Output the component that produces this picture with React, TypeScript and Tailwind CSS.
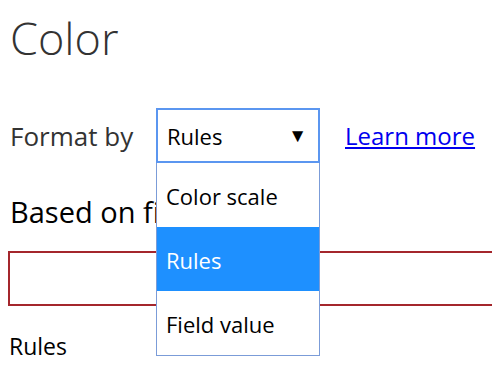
import React from "react";

const OPTIONS = ["Color scale", "Rules", "Field value"];

const App = () => {
  const selected = "Rules";

  return (
    <div className="w-[492px] h-[376px] overflow-hidden bg-white pl-2 font-['Open_Sans',sans-serif]">
      {/* Title */}
      <h1 className="pt-[12px] pl-[2px] text-[45px] leading-[52px] font-light text-[#333]">
        Color
      </h1>

      {/* Format by row */}
      <div className="mt-[44px] flex items-center h-[55px]">
        <span className="w-[148px] pl-[2px] pt-[2px] text-[26px] text-[#333]">Format by</span>
        <div className="relative">
          <div className="w-[164px] h-[55px] flex items-center justify-between pl-[10px] pr-[12px] border border-[#767676] outline-2 outline-[#5b96f0] -outline-offset-2 text-[22px] text-black">
            <span className="pt-[2px]">{selected}</span>
            <span className="text-[19px]">▼</span>
          </div>

          {/* Open list */}
          <ul className="absolute left-0 top-full z-10 w-[164px] bg-white border border-[#7b9cd8] border-t-0">
            {OPTIONS.map((opt) => (
              <li
                key={opt}
                className={`h-[64px] flex items-center pl-[9px] pt-[2px] text-[22px] ${
                  opt === selected ? "bg-[#1e90ff] text-white" : "text-black"
                }`}
              >
                {opt}
              </li>
            ))}
          </ul>
        </div>
        <a href="#" className="ml-[25px] text-[24px] text-[#0000ee] underline">
          Learn more
        </a>
      </div>

      {/* Based on field */}
      <h2 className="mt-[30px] pl-[2px] text-[29px] text-black leading-[38px]">Based on field</h2>

      <div className="mt-[20px] h-[55px] w-[500px] border-2 border-[#a4262c]" />

      <p className="mt-[25px] pl-[1px] text-[23px] text-black leading-[30px]">Rules</p>
    </div>
  );
};

export default App;
